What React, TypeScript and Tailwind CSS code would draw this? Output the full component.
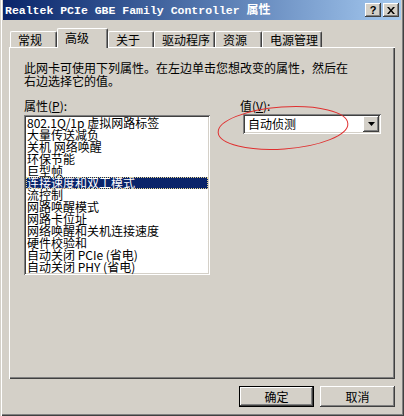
import React from "react";

const raised =
  "shadow-[inset_-1px_-1px_#404040,inset_1px_1px_#ffffff,inset_-2px_-2px_#808080,inset_2px_2px_#d4d0c8]";
const sunken =
  "shadow-[inset_1px_1px_#808080,inset_-1px_-1px_#ffffff,inset_2px_2px_#404040,inset_-2px_-2px_#d4d0c8]";

const tabs = [
  { label: "常规", w: "w-[47px]" },
  { label: "高级", w: "w-[51px]", active: true },
  { label: "关于", w: "w-[46px]" },
  { label: "驱动程序", w: "w-[61px]" },
  { label: "资源", w: "w-[47px]" },
  { label: "电源管理", w: "w-[60px]" },
];

const items = [
  "802.1Q/1p 虚拟网路标签",
  "大量传送减负",
  "关机 网络唤醒",
  "环保节能",
  "巨型帧",
  "连接速度和双工模式",
  "流控制",
  "网路唤醒模式",
  "网路卡位址",
  "网络唤醒和关机连接速度",
  "硬件校验和",
  "自动关闭 PCIe (省电)",
  "自动关闭 PHY (省电)",
];

export default function App() {
  return (
    <div className="relative w-[404px] h-[416px] bg-[#d4d0c8] flex flex-col font-['Noto_Sans_CJK_SC',sans-serif] text-[12px] leading-[12px] text-black shadow-[inset_1px_0_#d4d0c8,inset_2px_0_#ffffff,inset_-1px_-1px_#404040,inset_-2px_-2px_#808080]">
      {/* Title bar */}
      <div className="mx-[3px] h-[20px] flex items-center justify-between pl-[2px] pr-[2px] bg-gradient-to-r from-[#0a246a] to-[#a6caf0]">
        <div className="text-white font-bold text-[11.5px] font-['Liberation_Mono','Noto_Sans_CJK_SC',monospace] whitespace-pre">
          Realtek PCIe GBE Family Controller{" "}
          <span className="text-[12px] font-['Noto_Sans_CJK_SC',sans-serif]">属性</span>
        </div>
        <div className="flex gap-[2px]">
          <div className={`w-[16px] h-[14px] bg-[#d4d0c8] flex items-center justify-center font-['Liberation_Sans',sans-serif] font-bold text-[11px] ${raised}`}>
            ?
          </div>
          <div className={`w-[16px] h-[14px] bg-[#d4d0c8] flex items-center justify-center ${raised}`}>
            <svg width="8" height="7" viewBox="0 0 8 7">
              <path d="M0 0h2l2 2.5 2-2.5h2l-3 3.5 3 3.5h-2l-2-2.5-2 2.5h-2l3-3.5z" fill="#000" />
            </svg>
          </div>
        </div>
      </div>

      {/* Tabs */}
      <div className="mt-[8px] ml-[10px] h-[19px] flex items-end">
        {tabs.map((t) =>
          t.active ? (
            <div
              key={t.label}
              className={`${t.w} relative z-10 h-[20px] -mb-[1px] bg-[#d4d0c8] border-l border-t border-r border-l-white border-t-white border-r-[#404040] rounded-t-[2px] shadow-[inset_-1px_0_#808080] pl-[7px] pt-[3px]`}
            >
              {t.label}
            </div>
          ) : (
            <div
              key={t.label}
              className={`${t.w} h-[16px] bg-[#d4d0c8] border-l border-t border-r border-l-white border-t-white border-r-[#404040] rounded-t-[2px] shadow-[inset_-1px_0_#808080] pl-[7px] pt-[2px]`}
            >
              {t.label}
            </div>
          )
        )}
      </div>

      {/* Panel */}
      <div className="mx-[9px] h-[332px] shadow-[inset_1px_1px_#ffffff,inset_-1px_-1px_#404040,inset_-2px_-2px_#808080] pl-[15px] pt-[14px]">
        <p className="leading-[13px]">
          此网卡可使用下列属性。在左边单击您想改变的属性，然后在
          <br />
          右边选择它的值。
        </p>

        <div className="flex mt-[12px]">
          {/* Property list */}
          <div className="w-[186px] flex flex-col">
            <div className="leading-[13px]">
              属性(<span className="underline">P</span>):
            </div>
            <div className={`mt-[3px] h-[160px] bg-white p-[2px] ${sunken}`}>
              {items.map((it, i) =>
                i === 5 ? (
                  <div
                    key={it}
                    className="h-[12px] bg-[#0a246a] text-white pl-[1px] whitespace-nowrap outline-1 outline-dotted outline-[#e8d890] -outline-offset-1"
                  >
                    {it}
                  </div>
                ) : (
                  <div key={it} className="h-[12px] pl-[1px] whitespace-nowrap">
                    {it}
                  </div>
                )
              )}
            </div>
          </div>

          {/* Value */}
          <div className="ml-[30px] flex flex-col">
            <div className="leading-[13px]">
              值(<span className="underline">V</span>):
            </div>
            <div className={`mt-[2px] ml-[3px] w-[138px] h-[20px] bg-white flex items-center justify-between p-[2px] ${sunken}`}>
              <span className="pl-[3px]">自动侦测</span>
              <div className={`w-[16px] h-[16px] bg-[#d4d0c8] flex items-center justify-center ${raised}`}>
                <svg width="7" height="4" viewBox="0 0 7 4">
                  <path d="M0 0h7l-3.5 4z" fill="#000" />
                </svg>
              </div>
            </div>
          </div>
        </div>
      </div>

      {/* Buttons */}
      <div className="mt-[7px] mr-[9px] flex justify-end gap-[6px]">
        <div className="w-[75px] h-[21px] border border-black">
          <div className={`w-full h-full flex items-center justify-center ${raised}`}>确定</div>
        </div>
        <div className={`w-[75px] h-[21px] flex items-center justify-center ${raised}`}>取消</div>
      </div>

      {/* Red annotation ellipse */}
      <svg className="absolute left-[214px] top-[102px] pointer-events-none" width="140" height="52" viewBox="0 0 140 52">
        <ellipse cx="69" cy="26" rx="65" ry="21" transform="rotate(-4 69 26)" fill="none" stroke="#e03030" strokeWidth="1" />
      </svg>
    </div>
  );
}
